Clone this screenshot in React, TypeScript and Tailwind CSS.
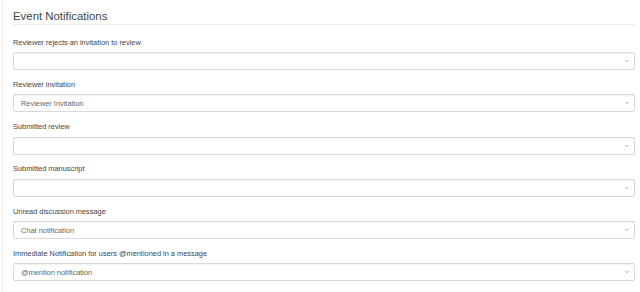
import { ChevronDown } from "lucide-react";

type Field = { label: string; value: string };

const fields: Field[] = [
  { label: "Reviewer rejects an invitation to review", value: "" },
  { label: "Reviewer invitation", value: "Reviewer Invitation" },
  { label: "Submitted review", value: "" },
  { label: "Submitted manuscript", value: "" },
  { label: "Unread discussion message", value: "Chat notification" },
  { label: "Immediate Notification for users @mentioned in a message", value: "@mention notification" },
];

function SelectRow({ label, value }: Field) {
  return (
    <div className="mb-[9.8px]">
      <div className="mb-[4.5px] text-[7.4px] leading-[10px] text-[#444]">{label}</div>
      <div className="flex h-[18px] items-center justify-between rounded-[2px] border border-[#d9d9d9] bg-white pl-[7px] pr-[4px] shadow-[inset_0_1px_1px_rgba(0,0,0,0.05)]">
        <span className="text-[7.4px] text-[#666]">{value}</span>
        <ChevronDown className="h-[6px] w-[6px] text-[#888]" strokeWidth={2.5} />
      </div>
    </div>
  );
}

export default function App() {
  return (
    <div className="h-[292px] w-[640px] overflow-hidden bg-white font-['Liberation_Sans',Arial,sans-serif]">
      <div className="ml-[2px] h-full border-l border-[#ececec] pl-[10px] pr-[5px] pt-[8px]">
        <div className="border-b border-[#eeeeee] text-[11.4px] leading-[16px] text-[#444]">
          Event Notifications
        </div>
        <div className="mt-[12.5px]">
          {fields.map((f) => (
            <SelectRow key={f.label} {...f} />
          ))}
        </div>
      </div>
    </div>
  );
}
